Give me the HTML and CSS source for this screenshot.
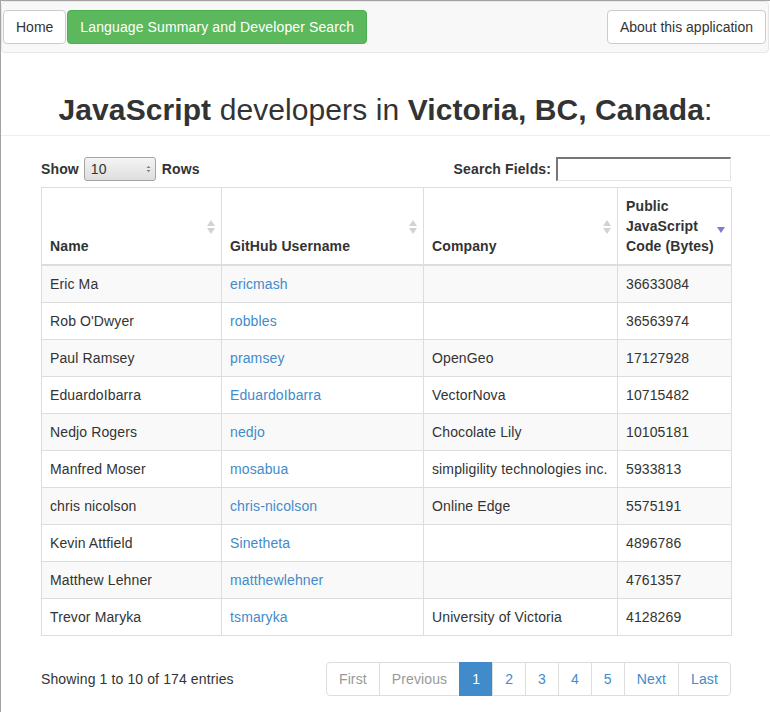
FILE: index.html
```html
<!DOCTYPE html>
<html lang="en">
<head>
<meta charset="utf-8">
<title>JavaScript developers in Victoria, BC, Canada</title>
<link rel="stylesheet" href="styles.css">
</head>
<body>
<div class="frame">
  <nav class="navbar">
    <div class="nav-left">
      <a class="btn btn-default">Home</a>
      <a class="btn btn-success">Language Summary and Developer Search</a>
    </div>
    <a class="btn btn-default">About this application</a>
  </nav>

  <div class="page-header">
    <h1><b>JavaScript</b> developers in <b>Victoria, BC, Canada</b>:</h1>
  </div>

  <main class="content">
    <div class="controls">
      <label class="length">Show
        <span class="fake-select"><span class="val">10</span>
          <svg class="spin" width="7" height="10" viewBox="0 0 7 10"><path d="M1.5 4 L3.5 2 L5.5 4 Z M1.5 6 L3.5 8 L5.5 6 Z" fill="#777"/></svg>
        </span>
        Rows</label>
      <label class="search">Search Fields: <input type="text" class="search-input"></label>
    </div>

    <table class="dev-table">
      <thead>
        <tr>
          <th class="c-name"><div class="th-in"><span>Name</span><span class="sort-both"><i class="up"></i><i class="down"></i></span></div></th>
          <th class="c-user"><div class="th-in"><span>GitHub Username</span><span class="sort-both"><i class="up"></i><i class="down"></i></span></div></th>
          <th class="c-comp"><div class="th-in"><span>Company</span><span class="sort-both"><i class="up"></i><i class="down"></i></span></div></th>
          <th class="c-code"><div class="th-in"><span>Public JavaScript Code (Bytes)</span><span class="sort-desc"><i class="down"></i></span></div></th>
        </tr>
      </thead>
      <tbody>
        <tr><td>Eric Ma</td><td><a>ericmash</a></td><td></td><td>36633084</td></tr>
        <tr><td>Rob O'Dwyer</td><td><a>robbles</a></td><td></td><td>36563974</td></tr>
        <tr><td>Paul Ramsey</td><td><a>pramsey</a></td><td>OpenGeo</td><td>17127928</td></tr>
        <tr><td>EduardoIbarra</td><td><a>EduardoIbarra</a></td><td>VectorNova</td><td>10715482</td></tr>
        <tr><td>Nedjo Rogers</td><td><a>nedjo</a></td><td>Chocolate Lily</td><td>10105181</td></tr>
        <tr><td>Manfred Moser</td><td><a>mosabua</a></td><td>simpligility technologies inc.</td><td>5933813</td></tr>
        <tr><td>chris nicolson</td><td><a>chris-nicolson</a></td><td>Online Edge</td><td>5575191</td></tr>
        <tr><td>Kevin Attfield</td><td><a>Sinetheta</a></td><td></td><td>4896786</td></tr>
        <tr><td>Matthew Lehner</td><td><a>matthewlehner</a></td><td></td><td>4761357</td></tr>
        <tr><td>Trevor Maryka</td><td><a>tsmaryka</a></td><td>University of Victoria</td><td>4128269</td></tr>
      </tbody>
    </table>

    <div class="footer">
      <div class="info">Showing 1 to 10 of 174 entries</div>
      <ul class="pagination">
        <li class="disabled"><a>First</a></li>
        <li class="disabled"><a>Previous</a></li>
        <li class="active"><a>1</a></li>
        <li><a>2</a></li>
        <li><a>3</a></li>
        <li><a>4</a></li>
        <li><a>5</a></li>
        <li><a>Next</a></li>
        <li><a>Last</a></li>
      </ul>
    </div>
  </main>
</div>
</body>
</html>
```
FILE: styles.css
```css
* { box-sizing: border-box; }
html, body { margin: 0; padding: 0; }
body {
  font-family: "Liberation Sans", Arial, Helvetica, sans-serif;
  font-size: 14px;
  line-height: 20px;
  color: #333;
  background: #fff;
  letter-spacing: 0.12px;
}
.frame {
  border-top: 1px solid #a3a3a3;
  border-left: 1px solid #a3a3a3;
  min-height: 712px;
}
.navbar {
  display: flex;
  justify-content: space-between;
  align-items: flex-start;
  height: 52px;
  margin: 0 1px 0 0;
  background: #f8f8f8;
  border: 1px solid #e7e7e7;
  border-radius: 4px;
  padding: 8px 2px 0 1px;
}
.nav-left { display: flex; }
.btn {
  display: inline-block;
  height: 34px;
  padding: 6px 12px;
  font-size: 14px;
  line-height: 20px;
  border: 1px solid #ccc;
  border-radius: 4px;
  background: #fff;
  color: #333;
  white-space: nowrap;
  text-decoration: none;
  letter-spacing: 0;
}
.btn-success {
  background: #5cb85c;
  border-color: #4cae4c;
  color: #fff;
  margin-left: 1px;
  letter-spacing: 0.12px;
}
.page-header {
  margin: 40px 0 20px;
  padding-bottom: 9px;
  border-bottom: 1px solid #eee;
}
h1 {
  margin: 0;
  font-size: 30px;
  line-height: 33px;
  font-weight: 400;
  text-align: center;
  color: #333;
  letter-spacing: 0.09px;
}
h1 b { font-weight: 700; }
.content {
  padding: 0 39px 0 40px;
}
.controls {
  display: flex;
  justify-content: space-between;
  align-items: center;
  height: 26px;
  margin-bottom: 5px;
}
.length, .search {
  display: flex;
  align-items: center;
  font-weight: 700;
}
.fake-select {
  display: inline-flex;
  align-items: center;
  justify-content: space-between;
  width: 72px;
  height: 24px;
  margin: 0 6px 0 5px;
  padding: 0 3px 0 6px;
  border: 1px solid #a4a4a4;
  border-radius: 3px;
  background: linear-gradient(#f4f4f4, #dedede);
  font-weight: 400;
  color: #333;
}
.spin { display: block; }
.search-input {
  width: 175px;
  height: 24px;
  margin-left: 5px;
  border-style: solid;
  border-width: 2px 1px 1px 2px;
  border-color: #767676 #e4e4e4 #e4e4e4 #767676;
  background: #fff;
  padding: 0 3px;
  font: inherit;
}
.dev-table {
  width: 100%;
  border-collapse: collapse;
  table-layout: fixed;
  border: 1px solid #ddd;
}
.dev-table th, .dev-table td {
  border: 1px solid #ddd;
  padding: 8px;
  text-align: left;
  vertical-align: top;
  line-height: 20px;
}
.dev-table thead th {
  border-bottom: 2px solid #ddd;
  vertical-align: bottom;
  font-weight: 700;
}
.c-name { width: 180px; }
.c-user { width: 202px; }
.c-comp { width: 194px; }
.c-code { width: 114px; }
.dev-table th.c-code { padding-right: 6px; }
.th-in {
  display: flex;
  justify-content: space-between;
  align-items: flex-end;
  min-height: 60px;
}
.th-in > span:first-child { flex: 1; }
.sort-both, .sort-desc {
  display: flex;
  flex-direction: column;
  align-items: center;
  gap: 2px;
  align-self: center;
  margin-right: -2px;
  margin-top: 1px;
}
.sort-both i, .sort-desc i {
  display: block;
  width: 0;
  height: 0;
  border-left: 4px solid transparent;
  border-right: 4px solid transparent;
}
.sort-both .up { border-bottom: 6px solid #d2d2d2; }
.sort-both .down { border-top: 6px solid #d2d2d2; }
.sort-desc { margin-top: 7px; margin-right: 0; }
.sort-desc .down { border-top: 6px solid #7c7cd6; }
.dev-table tbody tr:nth-child(odd) td { background: #f9f9f9; }
.dev-table a { color: #428bca; text-decoration: none; }
.footer {
  display: flex;
  justify-content: space-between;
  align-items: center;
  margin-top: 26px;
}
.pagination {
  display: flex;
  list-style: none;
  margin: 0;
  padding: 0;
}
.pagination li a {
  display: block;
  padding: 6px 12px;
  line-height: 20px;
  border: 1px solid #ddd;
  margin-left: -1px;
  color: #428bca;
  background: #fff;
  text-decoration: none;
}
.pagination li:first-child a { margin-left: 0; border-radius: 4px 0 0 4px; }
.pagination li:last-child a { border-radius: 0 4px 4px 0; }
.pagination li.disabled a { color: #999; }
.pagination li.active a { background: #428bca; border-color: #428bca; color: #fff; }
```
